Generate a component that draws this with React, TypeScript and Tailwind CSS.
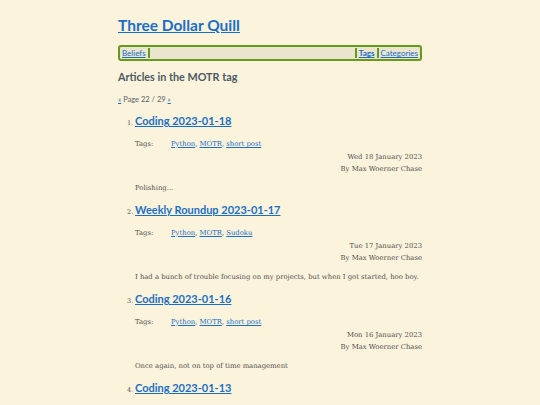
const articles = [
  {
    title: "Coding 2023-01-18",
    tags: ["Python", "MOTR", "short post"],
    date: "Wed 18 January 2023",
    summary: "Polishing...",
  },
  {
    title: "Weekly Roundup 2023-01-17",
    tags: ["Python", "MOTR", "Sudoku"],
    date: "Tue 17 January 2023",
    summary:
      "I had a bunch of trouble focusing on my projects, but when I got started, hoo boy.",
  },
  {
    title: "Coding 2023-01-16",
    tags: ["Python", "MOTR", "short post"],
    date: "Mon 16 January 2023",
    summary: "Once again, not on top of time management",
  },
  {
    title: "Coding 2023-01-13",
    tags: ["Python", "MOTR", "short post"],
    date: "Fri 13 January 2023",
    summary: "More work.",
  },
];

const sans = "font-['Lato','Open_Sans',sans-serif]";
const serif = "font-['DejaVu_Serif','Liberation_Serif',serif]";
const link = "text-[#1a6fc4] underline";

export default function App() {
  return (
    <div className="min-h-screen bg-[#fcf3dc] text-[#505050]">
      <div className="w-[304px] mx-auto pt-[14px]">
        <h1 className={`${sans} text-[15.5px] font-bold leading-[22px]`}>
          <a href="#" className={link}>
            Three Dollar Quill
          </a>
        </h1>

        {/* Nav */}
        <nav
          className={`${sans} mt-[9px] flex items-center h-[16px] border-2 border-[#649a1e] rounded-[3px] bg-[#ebe4cf] px-[2px] text-[8px] leading-[10px]`}
        >
          <a href="#" className={link}>
            Beliefs
          </a>
          <span className="w-[2px] h-[10px] bg-[#649a1e] ml-[2px]" />
          <div className="flex-1" />
          <span className="w-[2px] h-[10px] bg-[#649a1e] mr-[2px]" />
          <a href="#" className={`${link} font-bold`}>
            Tags
          </a>
          <span className="w-[2px] h-[10px] bg-[#649a1e] mx-[2px]" />
          <a href="#" className={link}>
            Categories
          </a>
        </nav>

        <h2 className={`${sans} mt-[8px] text-[10.8px] font-bold text-[#4b5a62] leading-[16px]`}>
          Articles in the MOTR tag
        </h2>

        <p className={`${sans} mt-[10px] text-[7.5px] leading-[10px] text-[#5a6268]`}>
          <a href="#" className={link}>
            «
          </a>{" "}
          Page 22 / 29{" "}
          <a href="#" className={link}>
            »
          </a>
        </p>

        <ol className="mt-[8px] pl-[17px]">
          {articles.map((a, i) => (
            <li key={a.title} className="h-[89px]">
              <div className="flex items-baseline">
                <span className={`${serif} text-[6.5px] w-[8px] -ml-[8px]`}>{i + 1}.</span>
                <h3 className={`${sans} text-[11px] font-bold leading-[16px]`}>
                  <a href="#" className={link}>
                    {a.title}
                  </a>
                </h3>
              </div>
              <div className={`${serif} text-[6.85px] leading-[12.5px]`}>
                <div className="mt-[9px] flex">
                  <span className="w-[36px]">Tags:</span>
                  <span>
                    {a.tags.map((t, j) => (
                      <span key={t}>
                        <a href="#" className={link}>
                          {t}
                        </a>
                        {j < a.tags.length - 1 ? ", " : ""}
                      </span>
                    ))}
                  </span>
                </div>
                <div className="text-right">{a.date}</div>
                <div className="text-right">By Max Woerner Chase</div>
                <p className="mt-[6px] whitespace-nowrap">{a.summary}</p>
              </div>
            </li>
          ))}
        </ol>
      </div>
    </div>
  );
}
